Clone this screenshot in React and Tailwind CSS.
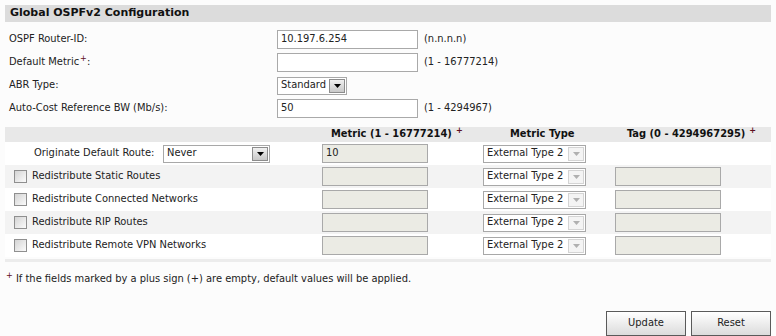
import React from "react";

const font = { fontFamily: '"DejaVu Sans Condensed", "Liberation Sans", Arial, sans-serif' };

const Plus = ({ gap = "ml-[1px]" }) => <sup className={`text-[#5e1020] text-[9px] relative -top-[4px] ${gap}`}>+</sup>;

const Arrow = ({ disabled }) => (
  <span
    className={`flex items-center justify-center w-[16px] h-[14px] border ${
      disabled ? "border-[#d4d4d4] bg-[#f4f4f4]" : "border-[#8c8c8c] bg-gradient-to-b from-[#f0f0f0] to-[#c8c8c8]"
    }`}
  >
    <svg width="7" height="4" viewBox="0 0 7 4">
      <path d="M0 0h7L3.5 4z" fill={disabled ? "#b0b0b0" : "#000"} />
    </svg>
  </span>
);

const Select = ({ value, w, disabled }) => (
  <div
    className={`${w} h-[18px] border border-[#a8a8a8] bg-white flex items-center justify-between pl-[3px] pr-[1px] text-[11px] text-[#222] whitespace-nowrap`}
  >
    <span>{value}</span>
    <Arrow disabled={disabled} />
  </div>
);

const TextInput = ({ value, w, disabled }) => (
  <div
    className={`${w} h-[19px] border border-[#a9a9a9] ${
      disabled ? "bg-[#ebebe4]" : "bg-white"
    } flex items-center pl-[3px] text-[11px] text-[#222]`}
  >
    {value}
  </div>
);

const Checkbox = () => (
  <span className="w-[13px] h-[13px] border border-[#8f8f8f] bg-gradient-to-br from-[#d4d4d4] to-[#fbfbfb] inline-block" />
);

const formRows = [
  { label: "OSPF Router-ID:", value: "10.197.6.254", hint: "(n.n.n.n)" },
  { label: "Default Metric", plus: true, value: "", hint: "(1 - 16777214)" },
  { label: "ABR Type:", select: true },
  { label: "Auto-Cost Reference BW (Mb/s):", value: "50", hint: "(1 - 4294967)" },
];

const redist = [
  "Redistribute Static Routes",
  "Redistribute Connected Networks",
  "Redistribute RIP Routes",
  "Redistribute Remote VPN Networks",
];

export default function App() {
  return (
    <div style={font} className="w-[776px] h-[336px] bg-[#fcfcfc] text-[#222] text-[11px] pt-[5px] px-[5px] overflow-hidden">
      <div
        style={{ fontFamily: '"DejaVu Sans", "Liberation Sans", sans-serif' }}
        className="h-[17px] bg-[#dcdcdc] pl-[5px] flex items-center font-bold text-[11px] text-[#111]"
      >
        Global OSPFv2 Configuration
      </div>

      <div className="mt-[6px]">
        {formRows.map((r) => (
          <div key={r.label} className="h-[23px] flex items-center">
            <div className="w-[272px] pl-[4px]">
              {r.label}
              {r.plus && (
                <>
                  <Plus />:
                </>
              )}
            </div>
            {r.select ? (
              <Select value="Standard" w="w-[70px]" />
            ) : (
              <>
                <TextInput value={r.value} w="w-[141px]" />
                <span className="ml-[6px]">{r.hint}</span>
              </>
            )}
          </div>
        ))}
      </div>

      <div className="mt-[7px] h-[15px] bg-[#e8e8e8] flex items-center font-bold text-[11px] text-[#111]">
        <div className="w-[317px]" />
        <div className="w-[161px] pl-[9px] whitespace-nowrap">
          Metric (1 - 16777214)
          <Plus gap="ml-[4px]" />
        </div>
        <div className="w-[132px] pl-[27px]">Metric Type</div>
        <div className="pl-[12px] whitespace-nowrap">
          Tag (0 - 4294967295)
          <Plus gap="ml-[4px]" />
        </div>
      </div>

      <div className="h-[23px] flex items-center bg-white">
        <div className="w-[317px] flex items-center">
          <span className="pl-[29px] w-[158px]">Originate Default Route:</span>
          <Select value="Never" w="w-[107px]" />
        </div>
        <div className="w-[161px]">
          <TextInput value="10" w="w-[106px]" disabled />
        </div>
        <div className="w-[132px]">
          <Select value="External Type 2" w="w-[103px]" disabled />
        </div>
      </div>

      {redist.map((label, i) => (
        <div key={label} className={`h-[23px] flex items-center ${i % 2 === 0 ? "bg-[#f3f3f3]" : "bg-white"}`}>
          <div className="w-[317px] flex items-center pl-[9px] gap-[5px]">
            <Checkbox />
            <span>{label}</span>
          </div>
          <div className="w-[161px]">
            <TextInput value="" w="w-[106px]" disabled />
          </div>
          <div className="w-[132px]">
            <Select value="External Type 2" w="w-[103px]" disabled />
          </div>
          <div>
            <TextInput value="" w="w-[106px]" disabled />
          </div>
        </div>
      ))}

      <div className="mt-[2px] h-[3px] bg-[#ececec]" />

      <p className="mt-[9px]">
        <Plus /> If the fields marked by a plus sign (+) are empty, default values will be applied.
      </p>

      <div className="mt-[23px] flex justify-end gap-[5px]">
        {["Update", "Reset"].map((b) => (
          <button
            key={b}
            className="w-[80px] h-[25px] border border-[#5a5a5a] bg-gradient-to-b from-[#ffffff] to-[#dcdcdc] text-[11px] text-[#222]"
          >
            {b}
          </button>
        ))}
      </div>
    </div>
  );
}
